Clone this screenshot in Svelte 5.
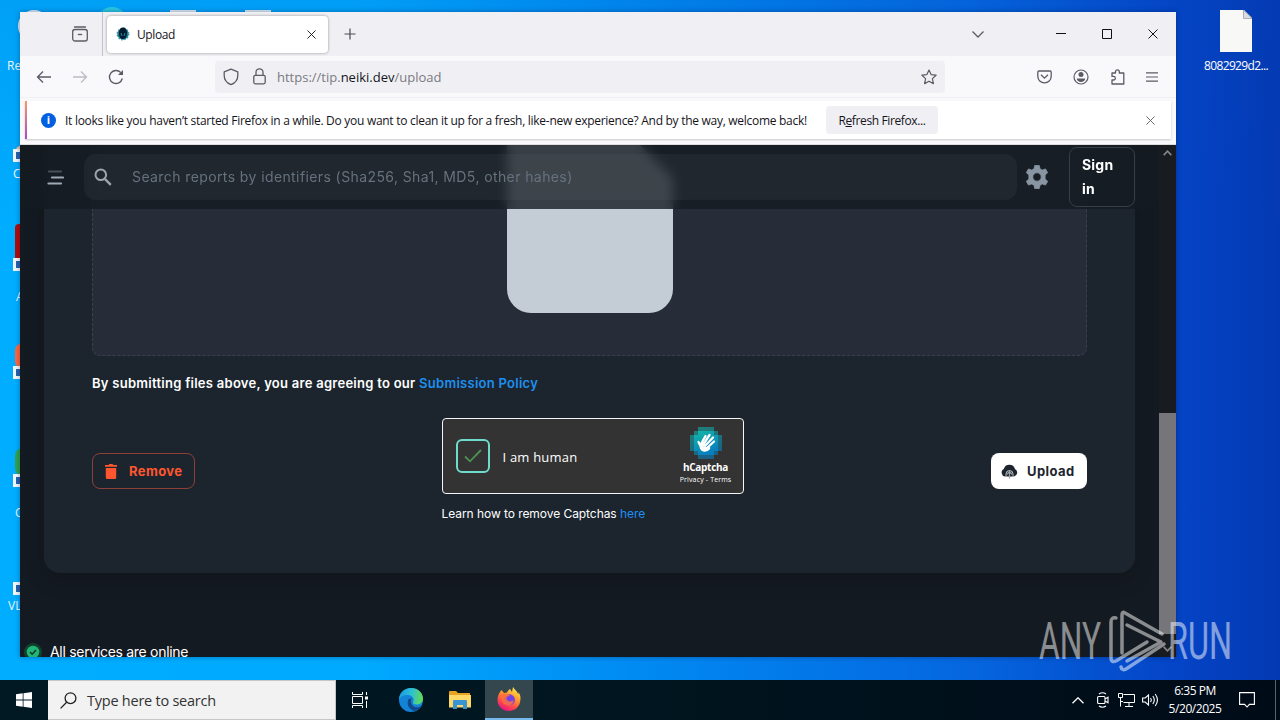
<script lang="ts">
	interface Shortcut {
		top: number;
		color: string;
		shape: string;
		height: number;
	}

	const shortcuts: Shortcut[] = [
		{ top: 145, color: '#f3c49b', shape: '8px 0 0 0', height: 12 },
		{ top: 224, color: '#b30b0b', shape: '4px 0 0 0', height: 36 },
		{ top: 343, color: '#ff653f', shape: '10px 0 0 10px', height: 26 },
		{ top: 448, color: '#31a350', shape: '14px 0 0 14px', height: 28 }
	];

	let query = $state('');
	let verified = $state(true);
</script>

{#snippet cross(size: number)}
	<svg width={size} height={size} viewBox="0 0 10 10" fill="none" stroke="currentColor">
		<path d="M.5.5l9 9M9.5.5l-9 9" />
	</svg>
{/snippet}

<div class="screen">
	<div class="desktop">
		<span class="behind round" style="left: 18px"></span>
		<span class="behind round teal" style="left: 96px"></span>
		<span class="behind" style="left: 170px"></span>
		<span class="behind" style="left: 245px"></span>

		<span class="icon-label" style="left: 7px; top: 58px">Re</span>
		<span class="icon-label" style="left: 13px; top: 166px">C</span>
		<span class="icon-label" style="left: 16px; top: 289px">A</span>
		<span class="icon-label" style="left: 15px; top: 505px">C</span>
		<span class="icon-label" style="left: 8px; top: 598px">VL</span>
		{#each shortcuts as item (item.top)}
			<span
				class="shard"
				style="top: {item.top}px; height: {item.height}px; background: {item.color}; border-radius: {item.shape}"
			></span>
		{/each}
		{#each [149, 258, 366, 474, 582] as top (top)}
			<span class="link-badge" style="top: {top}px"></span>
		{/each}

		<div class="file-icon">
			<svg width="32" height="42" viewBox="0 0 32 42">
				<path d="M0 0h24l8 8v34H0z" fill="#f8f9f6" />
				<path d="M23.500 0v8.500H32z" fill="#d9dde0" stroke="#8f969c" stroke-width=".7" />
			</svg>
			<span>8082929d2...</span>
		</div>

		<main class="window">
			<div class="tabbar">
				<div class="view-button">
					<svg width="16" height="16" viewBox="0 0 16 16" fill="none" stroke="#5b5b66" stroke-width="1.300">
						<path d="M2.500 1h11" stroke-linecap="round" />
						<rect x=".7" y="3.500" width="14.600" height="11.500" rx="2.200" />
						<path d="M5.800 8.500h4.400" />
					</svg>
				</div>
				<div class="tab">
					<svg width="14" height="14" viewBox="0 0 14 14">
						<circle cx="7" cy="7" r="5.700" fill="#177c8c" stroke="#3c9ca8" stroke-width="1.500" stroke-dasharray="1.500 1.500" />
						<path d="M7 .5c3 0 4 2.500 4 5.500S9.500 12 7 12 3 9.500 3 6.500 4 .5 7 .5z" fill="#061a30" />
						<path d="M5 6l1 3M9 6L8 9" stroke="#1f8ba5" />
					</svg>
					<span class="tab-title">Upload</span>
					{@render cross(9)}
				</div>
				<svg class="plus" width="12" height="12" viewBox="0 0 12 12" stroke="#4a4a55" stroke-width="1.200">
					<path d="M6 .5v11M.5 6h11" />
				</svg>
				<div class="caption">
					<svg width="12" height="7" viewBox="0 0 12 7" fill="none" stroke="#5b5b66" stroke-width="1.300"><path d="M.5.5L6 6 11.500.5" /></svg>
					<svg width="10" height="10" viewBox="0 0 10 10" stroke="#111"><path d="M0 4.500h10" /></svg>
					<svg width="10" height="10" viewBox="0 0 10 10" fill="none" stroke="#111"><path d="M.5.5h9v9h-9z" /></svg>
					{@render cross(10)}
				</div>
			</div>

			<div class="navbar">
				<div class="nav-buttons">
					<svg width="16" height="14" viewBox="0 0 16 14" fill="none" stroke="#5b5b66" stroke-width="1.300"><path d="M15 7H1.500M7 1.500L1.500 7 7 12.500" /></svg>
					<svg width="16" height="14" viewBox="0 0 16 14" fill="none" stroke="#bcbcc3" stroke-width="1.300"><path d="M1 7h13.500M9 1.500L14.500 7 9 12.500" /></svg>
					<svg width="16" height="16" viewBox="0 0 16 16" fill="none" stroke="#5b5b66" stroke-width="1.400">
						<path d="M14.300 9.500A6.500 6.500 0 1 1 12.800 3.600" />
						<path d="M15 1v5h-5z" fill="#5b5b66" stroke="none" />
					</svg>
				</div>
				<div class="urlbar">
					<svg width="16" height="18" viewBox="0 0 16 18" fill="none" stroke="#5b5b66" stroke-width="1.300" stroke-linejoin="round">
						<path d="M8 1.200l6.800 2.600v3.700c0 4-2.600 7.500-6.800 9.200C3.800 15 1.200 11.500 1.200 7.500V3.800z" />
					</svg>
					<svg width="13" height="17" viewBox="0 0 13 17" fill="none" stroke="#5b5b66" stroke-width="1.300">
						<rect x=".8" y="7.300" width="11.400" height="8.500" rx="1.500" />
						<path d="M3 7V4.300a3.500 3.500 0 0 1 7 0V7" />
					</svg>
					<span class="url">https://tip.<b>neiki.dev</b>/upload</span>
					<svg width="16" height="16" viewBox="0 0 16 16" fill="none" stroke="#5b5b66" stroke-width="1.200" stroke-linejoin="round">
						<path d="M8 1l2.100 4.600 5 .6-3.700 3.400 1 5L8 12.200l-4.400 2.400 1-5L.9 6.200l5-.6z" />
					</svg>
				</div>
				<div class="tools">
					<svg width="15" height="14" viewBox="0 0 15 14" fill="none" stroke="#5b5b66" stroke-width="1.300">
						<path d="M2 1h11a1.200 1.200 0 0 1 1.200 1.200v4a6.700 6.700 0 0 1-13.400 0v-4A1.200 1.200 0 0 1 2 1z" />
						<path d="M4 4.800l3.500 3.400L11 4.800" />
					</svg>
					<svg width="16" height="16" viewBox="0 0 16 16" fill="none" stroke="#5b5b66" stroke-width="1.200">
						<circle cx="8" cy="8" r="7" />
						<circle cx="8" cy="5.600" r="2.500" fill="#5b5b66" stroke="none" />
						<path d="M3.800 9.500h8.400c0 2-2 3.500-4.200 3.500s-4.200-1.500-4.200-3.500z" fill="#5b5b66" stroke="none" />
					</svg>
					<svg width="15" height="16" viewBox="0 0 15 16" fill="none" stroke="#5b5b66" stroke-width="1.300" stroke-linejoin="round">
						<path d="M5.500 4V2.800a1.900 1.900 0 0 1 3.800 0V4h4.500v11H2v-4h1.500a1.800 1.800 0 0 0 0-3.600H2V4z" />
					</svg>
					<svg width="12" height="10" viewBox="0 0 12 10" stroke="#5b5b66" stroke-width="1.200"><path d="M0 .8h12M0 5h12M0 9.200h12" /></svg>
				</div>
			</div>

			<div class="notice-wrap">
				<div class="notice">
					<span class="info">i</span>
					<span class="notice-text">
						It looks like you haven’t started Firefox in a while. Do you want to clean it up for a fresh, like-new experience? And by the way, welcome back!
					</span>
					<button class="refresh">R<u>e</u>fresh Firefox...</button>
					<span class="dismiss">{@render cross(9)}</span>
				</div>
			</div>

			<div class="viewport">
				<div class="page">
					<header class="topbar">
						<svg class="menu" width="17" height="15" viewBox="0 0 17 15" stroke-width="2.200" stroke-linecap="round">
							<path d="M2 1.500h12" stroke="#48515a" />
							<path d="M5 7.500h11" stroke="#9fa9b4" />
							<path d="M1.500 13.500h12.500" stroke="#9fa9b4" />
						</svg>
						<div class="search">
							<svg width="18" height="18" viewBox="0 0 18 18" fill="none" stroke="#9fa5aa" stroke-width="2">
								<circle cx="6.800" cy="6.800" r="5.300" />
								<path d="M10.800 10.800l6 6" stroke-width="2.400" />
							</svg>
							<input
								bind:value={query}
								aria-label="Search reports"
								placeholder="Search reports by identifiers (Sha256, Sha1, MD5, other hahes)"
							/>
						</div>
						<svg class="gear" width="24" height="24" viewBox="0 0 24 24" fill="#8995a2" stroke="#8995a2" stroke-width=".8" stroke-linejoin="round">
							<path
								fill-rule="evenodd"
								d="M9.700.5h4.600l.7 3.300 2.200 1.300 3.300-1.200 2.200 3.800-2.600 2.300v4l2.600 2.300-2.200 3.800-3.300-1.200-2.200 1.300-.7 3.300H9.700L9 20.200l-2.200-1.300-3.300 1.200-2.200-3.800L3.900 14v-4L1.300 7.700l2.200-3.800 3.300 1.200L9 3.800zM12 7.800a4.200 4.200 0 1 0 0 8.400 4.200 4.200 0 0 0 0-8.400z"
							/>
						</svg>
						<button class="signin">Sign in</button>
					</header>

					<section class="card">
						<div class="dropzone">
							<svg width="166" height="168" viewBox="0 0 166 168" fill="#c4cdd5">
								<path d="M0 0H133L166 33V144a24 24 0 0 1-24 24H24a24 24 0 0 1-24-24z" />
							</svg>
						</div>
						<p class="policy">By submitting files above, you are agreeing to our <a href="#policy">Submission Policy</a></p>
						<div class="actions">
							<button class="remove">
								<svg width="12" height="15" viewBox="0 0 12 15" fill="#ff5630">
									<path d="M0 1h3.500L4.500 0h3l1 1H12v1.800H0zM.8 4h10.400v9.500A1.500 1.500 0 0 1 9.700 15H2.300a1.500 1.500 0 0 1-1.500-1.500z" />
								</svg>
								<span>Remove</span>
							</button>
							<div class="captcha-col">
								<div class="captcha">
									<button class="check" aria-label="I am human" onclick={() => (verified = !verified)}>
										{#if verified}
											<svg width="18" height="14" viewBox="0 0 18 14" fill="none" stroke="#4c9353" stroke-width="1.800"><path d="M1 7.500l5 4.800L17 1" /></svg>
										{/if}
									</button>
									<span class="human">I am human</span>
									<div class="brand">
										<svg width="32" height="32" viewBox="0 0 32 32">
											<defs>
												<linearGradient id="tiles" x1="0" y1="0" x2=".4" y2="1">
													<stop offset="0" stop-color="#13b7a5" />
													<stop offset="1" stop-color="#087fbf" />
												</linearGradient>
											</defs>
											<path d="M8 0h16v4h4v4h4v16h-4v4h-4v4H8v-4H4v-4H0V8h4V4h4z" fill="url(#tiles)" opacity=".6" />
											<path d="M8 4h16v4h4v16h-4v4H8v-4H4V8h4z" fill="url(#tiles)" />
											<g fill="none" stroke="#fff" stroke-width="2.300" stroke-linecap="round">
												<path d="M11 17l4.500-8M13 18l6.500-10M15 19l8-8.500M17 21l7-6.500M11 20l-2.500-5" />
												<path d="M11.500 18.500c-.5 5 4 6 7 2.500" fill="#fff" stroke-width="3.500" />
											</g>
										</svg>
										<strong>hCaptcha</strong>
										<small>Privacy - Terms</small>
									</div>
								</div>
								<p class="learn">Learn how to remove Captchas <a href="#captcha">here</a></p>
							</div>
							<button class="upload">
								<svg width="17" height="15" viewBox="0 0 17 15">
									<path d="M4 12.500A4 4 0 0 1 2.800 5 5.800 5.800 0 0 1 14 5a4 4 0 0 1-1 7.500z" fill="#1c252e" />
									<path d="M5 12.500V10a3.500 3.500 0 0 1 7 0v2.500" fill="none" stroke="#fff" stroke-width=".7" />
									<path d="M8.500 14.500V8M5.900 10.200l2.600-2.500 2.600 2.500" fill="none" stroke="#9ba0a5" stroke-width="1.200" />
								</svg>
								<span>Upload</span>
							</button>
						</div>
					</section>

					<footer>
						<svg width="18" height="18" viewBox="0 0 18 18">
							<circle cx="9" cy="9" r="9" fill="#10412f" />
							<circle cx="9" cy="9" r="6.300" fill="#22b573" />
							<path d="M6 9l2.200 2.200L12 7" fill="none" stroke="#123a2c" stroke-width="1.600" />
						</svg>
						<span>All services are online</span>
					</footer>
				</div>
				<div class="scrollbar">
					<svg width="9" height="6" viewBox="0 0 9 6" fill="none" stroke="#84858a" stroke-width="1.700"><path d="M.7 5.200L4.500 1.200l3.800 4" /></svg>
					<div class="thumb"></div>
					<svg width="9" height="6" viewBox="0 0 9 6" fill="none" stroke="#84858a" stroke-width="1.700"><path d="M.7.8l3.800 4 3.800-4" /></svg>
				</div>
			</div>
		</main>

		<svg class="watermark" width="210" height="66" viewBox="0 0 210 66">
			<g fill="#fff" font-family="Roboto, sans-serif" font-size="51" font-weight="400">
				<text x="3" y="51" textLength="62" lengthAdjust="spacingAndGlyphs">ANY</text>
				<text x="132" y="51" textLength="64" lengthAdjust="spacingAndGlyphs">RUN</text>
			</g>
			<g fill="none" stroke="#fff" stroke-width="3.500" stroke-linejoin="round" stroke-linecap="round">
				<path d="M86 45V7q0-4 3-2l37 21" />
				<path d="M80 10q-5-1-5 4v36q0 5 5 3l31-19" />
				<path d="M91 17l34 17-34 19" />
				<path d="M85 59q1 4 5 2l38-25" />
			</g>
		</svg>
	</div>

	<div class="taskbar">
		<div class="start">
			<svg width="16" height="16" viewBox="0 0 16 16" fill="#fff"><path d="M0 2.300l6.700-1v6.300H0zM7.500 1.200L16 0v7.600H7.500zM0 8.400h6.700v6.300l-6.700-1zM7.500 8.400H16V16l-8.500-1.200z" /></svg>
		</div>
		<div class="task-search">
			<svg width="17" height="17" viewBox="0 0 17 17" fill="none" stroke="#222" stroke-width="1.300"><circle cx="10.500" cy="6.200" r="5.400" /><path d="M6.600 10.200L.6 16.400" /></svg>
			<span>Type here to search</span>
		</div>
		<div class="task">
			<svg width="16" height="16" viewBox="0 0 16 16" fill="none" stroke="#fff">
				<path d="M.5 0v2.500h10V0M.5 16v-2.500h10V16M.5 4.500h10v7H.5zM14.500 0v3M14.500 9v7" />
				<path d="M13 4.500h3v3h-3z" fill="#fff" stroke="none" />
			</svg>
		</div>
		<div class="task edge">
			<svg width="24" height="24" viewBox="0 0 24 24">
				<defs>
					<linearGradient id="edge-top" x1="0" y1=".4" x2="1" y2=".5">
						<stop offset="0" stop-color="#199be2" />
						<stop offset=".5" stop-color="#2cc0d4" />
						<stop offset="1" stop-color="#65db52" />
					</linearGradient>
				</defs>
				<circle cx="12" cy="12" r="12" fill="#1383d8" />
				<path d="M0 12C0 5 5 0 12 0s12 5 12 10.500c0 4-3 6-6.500 6-3 0-4-1.200-3.300-2.500C16 10 12.500 7 9 7 4 7 1 9 0 12z" fill="url(#edge-top)" />
				<path d="M9.500 11c-2.500 5 .5 11 6.500 12 3-1 5.500-3 6.500-5-4 2.500-10 1.500-10.500-4.500 0-1.500.4-2.500 1-3z" fill="#114a8b" />
			</svg>
		</div>
		<div class="task files">
			<svg width="22" height="18" viewBox="0 0 22 18">
				<path d="M0 1q0-1 1-1h6l2 2h12v5H0z" fill="#e8a321" />
				<path d="M0 4h22v12.500H0z" fill="#ffd967" />
				<path d="M4 10q0-1 1-1h12q1 0 1 1v8h-4v-4H8v4H4z" fill="#3a94d4" />
			</svg>
		</div>
		<div class="task active">
			<svg width="24" height="24" viewBox="0 0 24 24">
				<defs>
					<linearGradient id="fox" x1=".8" y1="0" x2=".3" y2="1">
						<stop offset="0" stop-color="#fff04d" />
						<stop offset=".4" stop-color="#ff9a2b" />
						<stop offset=".75" stop-color="#ff4050" />
						<stop offset="1" stop-color="#e31587" />
					</linearGradient>
				</defs>
				<path d="M3 5l1.500-2L7 6l3-.5C11 3 13 2 13 2l2 3 1-5c2 3 4 4 5 7 1-.5.500-2 .5-2C24 9 24 12 22.500 17 20 22 16 24 12 24 5 24 .5 19 .5 13c0-3 1-6 2.500-8z" fill="url(#fox)" />
				<circle cx="12.500" cy="12.800" r="5.500" fill="#7542e5" />
				<path d="M4 8c3-2 7-2 9 1-3 0-4 1.500-3.500 3 1 3 5 3 7 1 0 4-3 6-6 5.500C6 18 4 13 4 8z" fill="#ff7139" opacity=".85" />
			</svg>
		</div>
		<div class="tray">
			<svg width="12" height="7" viewBox="0 0 12 7" fill="none" stroke="#fff" stroke-width="1.300"><path d="M.5 6.300L6 .8l5.500 5.500" /></svg>
			<svg class="meet" width="12" height="16" viewBox="0 0 12 16" fill="none" stroke="#fff" stroke-width="1.100">
				<path d="M2 2q3.500-2.500 7 0M2 14q3.500 2.500 7 0" />
				<rect x=".6" y="4.500" width="7.400" height="7" rx="1" /><path d="M8 7l3-1.800v5.600L8 9" />
			</svg>
			<svg class="net" width="17" height="14" viewBox="0 0 17 14" fill="none" stroke="#fff">
				<path d="M5.500 1.500h11v8h-11M11 9.500v4M7 13.500h8M.5.5h4v4h-4zM2.500 4.500v9M2.500 8.500H5" />
			</svg>
			<svg class="sound" width="17" height="14" viewBox="0 0 17 14" fill="none" stroke="#fff" stroke-width="1.100">
				<path d="M.6 5h2.600L6.500 2v10L3.200 9H.6z" /><path d="M8.500 5q1.500 2 0 4M10.800 3q3 4 0 8M13.200 1q4.500 6 0 12" />
			</svg>
			<div class="clock"><span>6:35 PM</span><span>5/20/2025</span></div>
			<svg class="action" width="16" height="16" viewBox="0 0 16 16" fill="none" stroke="#fff" stroke-width="1.100"><path d="M.6.600h14.800v11.800h-5L8 15l-2.400-2.600h-5z" /></svg>
			<span class="peek"></span>
		</div>
	</div>
</div>

<style>
	:global(body) {
		margin: 0;
		overflow: hidden;
	}

	.screen {
		width: 1280px;
		height: 720px;
		display: flex;
		flex-direction: column;
		font-family: 'Open Sans', 'Noto Sans', sans-serif;
		font-size: 12px;
		color: #15141a;
	}

	.screen * {
		box-sizing: border-box;
	}

	svg {
		display: block;
		flex: none;
	}

	button {
		font: inherit;
		border: 0;
		margin: 0;
	}

	.desktop {
		position: relative;
		height: 680px;
		overflow: hidden;
		background:
			linear-gradient(to bottom, rgb(0 70 180 / 0.12), transparent 35%),
			linear-gradient(90deg, #00adff 0, #00aaff 28%, #008af2 50%, #0566df 76%, #0444c6 92%, #0439b2 100%);
	}

	/* desktop icons that stick out from behind the window */
	.behind {
		position: absolute;
		top: 10px;
		width: 26px;
		height: 14px;
		background: #dceaf5;
	}

	.round {
		width: 32px;
		height: 32px;
		border-radius: 50%;
	}

	.teal {
		top: 7px;
		background: #29c6df;
	}

	.icon-label {
		position: absolute;
		color: #e9f7ff;
		line-height: 16px;
	}

	.shard {
		position: absolute;
		left: 15px;
		width: 8px;
	}

	.link-badge {
		position: absolute;
		left: 13px;
		width: 12px;
		height: 13px;
		border: 3px solid #f4f8fb;
		background: #2862ad;
	}

	.file-icon {
		position: absolute;
		left: 1196px;
		top: 10px;
		width: 80px;
		display: flex;
		flex-direction: column;
		align-items: center;
		gap: 6px;
		color: #fff;
		line-height: 16px;
		letter-spacing: -0.65px;
	}

	.window {
		position: absolute;
		left: 20px;
		top: 12px;
		width: 1156px;
		height: 645px;
		display: flex;
		flex-direction: column;
		background: #f9f9fb;
		box-shadow: 0 0 5px rgb(0 20 60 / 0.4);
	}

	.tabbar {
		height: 44px;
		display: flex;
		align-items: center;
		background: #f0f0f4;
	}

	.view-button {
		width: 83px;
		height: 44px;
		display: flex;
		align-items: center;
		justify-content: flex-end;
		padding-right: 14px;
		border-right: 1px solid #c3c3c9;
	}

	.tab {
		width: 221px;
		height: 37px;
		margin-left: 4px;
		display: flex;
		align-items: center;
		padding: 0 12px 0 9px;
		border-radius: 4px;
		background: #fff;
		box-shadow: 0 0 3px rgb(0 0 0 / 0.4);
	}

	.tab-title {
		flex: 1;
		margin-left: 7px;
		letter-spacing: -0.4px;
	}

	.plus {
		margin-left: 16px;
	}

	.caption {
		margin-left: auto;
		display: flex;
		align-items: center;
		padding-right: 18px;
	}

	.caption svg {
		margin-left: 36px;
	}

	.caption svg:nth-child(2) {
		margin-left: 72px;
	}

	.navbar {
		height: 41px;
		display: flex;
		align-items: center;
	}

	.nav-buttons {
		width: 195px;
		padding-left: 16px;
		display: flex;
		align-items: center;
		gap: 20px;
	}

	.urlbar {
		width: 730px;
		height: 32px;
		display: flex;
		align-items: center;
		padding: 0 8px;
		border-radius: 4px;
		background: #f0f0f4;
	}

	.urlbar svg:nth-child(2) {
		margin-left: 14px;
	}

	.url {
		flex: 1;
		margin-left: 11px;
		font-size: 13px;
		color: #7a7a82;
	}

	.url b {
		font-weight: 400;
		color: #15141a;
	}

	.tools {
		flex: 1;
		display: flex;
		align-items: center;
		justify-content: flex-end;
		gap: 21px;
		padding-right: 18px;
	}

	.notice-wrap {
		height: 48px;
		padding: 3px 5px 4px;
		border-top: 1px solid #f1f1f4;
		border-bottom: 1px solid #ddd;
	}

	.notice {
		height: 38px;
		display: flex;
		align-items: center;
		padding: 0 16px 0 14px;
		border-left: 2px solid;
		border-image: linear-gradient(#ff9a65, #a24cc9) 1;
		background: #fff;
		box-shadow: 0 1px 2px rgb(0 0 0 / 0.2);
	}

	.info {
		width: 15px;
		height: 15px;
		border-radius: 50%;
		background: #0060df;
		color: #fff;
		font-size: 11px;
		font-weight: 700;
		line-height: 14px;
		text-align: center;
	}

	.notice-text {
		width: 742px;
		margin: 0 19px 0 9px;
		letter-spacing: -0.283px;
		white-space: nowrap;
	}

	.refresh {
		width: 112px;
		height: 28px;
		padding: 0;
		border-radius: 4px;
		background: #f0f0f4;
		color: #15141a;
		letter-spacing: -0.38px;
	}

	.dismiss {
		margin-left: auto;
		color: #5b5b66;
	}

	.viewport {
		height: 512px;
		display: flex;
		overflow: hidden;
		background: #141a21;
		font-family: Inter, 'Liberation Sans', sans-serif;
		color: #fff;
	}

	.page {
		position: relative;
		width: 1139px;
		display: flex;
		flex-direction: column;
	}

	/* stays over the scrolled card */
	.topbar {
		position: absolute;
		z-index: 1;
		top: 0;
		left: 0;
		right: 0;
		height: 64px;
		display: flex;
		align-items: center;
		padding: 0 24px 0 27px;
		background: rgb(20 26 33 / 0.8);
		backdrop-filter: blur(6px);
	}

	.search {
		width: 933px;
		height: 46px;
		margin-left: 20px;
		display: flex;
		align-items: center;
		padding: 0 10px;
		border-radius: 12px;
		background: rgb(145 158 171 / 0.08);
	}

	.search input {
		flex: 1;
		margin-left: 20px;
		padding: 0;
		border: 0;
		outline: 0;
		background: none;
		color: #fff;
		font: 14px/20px Inter, sans-serif;
		letter-spacing: 0.4px;
	}

	.search input::placeholder {
		color: #66727e;
	}

	.gear {
		margin-left: 8px;
	}

	.signin {
		width: 66px;
		height: 60px;
		margin-left: auto;
		padding: 0 12px;
		border: 1px solid #363e47;
		border-radius: 8px;
		background: none;
		color: #fff;
		font-size: 14px;
		font-weight: 700;
		line-height: 24px;
		letter-spacing: 0.2px;
		text-align: left;
		white-space: normal;
	}

	.card {
		height: 428px;
		flex: none;
		margin: 0 24px;
		padding: 0 48px;
		border-radius: 0 0 16px 16px;
		background: #1c252e;
		box-shadow: 0 8px 20px rgb(0 0 0 / 0.15);
	}

	.dropzone {
		height: 211px;
		display: flex;
		justify-content: center;
		border: 1px dashed #38424f;
		border-top: 0;
		border-radius: 0 0 8px 8px;
		background: #262d38;
	}

	.policy {
		margin: 16px 0 23px;
		font-size: 13px;
		font-weight: 600;
		line-height: 23px;
		letter-spacing: 0.27px;
	}

	a {
		color: #1c8ff0;
		text-decoration: none;
	}

	.actions {
		display: flex;
		justify-content: space-between;
		align-items: flex-start;
	}

	.remove,
	.upload {
		height: 36px;
		margin-top: 35px;
		display: flex;
		align-items: center;
		padding: 0;
		border-radius: 8px;
		font-size: 13px;
		font-weight: 700;
		letter-spacing: 0.4px;
	}

	.remove {
		width: 103px;
		padding-left: 12px;
		gap: 12px;
		border: 1px solid #8d4038;
		background: none;
		color: #ff5630;
	}

	.upload {
		width: 96px;
		padding-left: 10px;
		gap: 9px;
		background: #fff;
		color: #1c252e;
	}

	.captcha-col {
		width: 302px;
	}

	.captcha {
		height: 76px;
		display: flex;
		align-items: center;
		padding: 0 10px 0 13px;
		border: 1px solid #f5f5f5;
		border-radius: 4px;
		background: #333;
	}

	.actions .captcha-col {
		margin-right: 1px;
	}

	.check {
		width: 34px;
		height: 34px;
		display: flex;
		align-items: center;
		justify-content: center;
		padding: 0;
		border: 2px solid #6fdccb;
		border-radius: 6px;
		background: none;
	}

	.human {
		margin: 1px 0 0 13px;
		font-family: 'Open Sans', sans-serif;
		font-size: 13px;
		letter-spacing: 0.2px;
	}

	.brand {
		width: 54px;
		margin-left: auto;
		display: flex;
		flex-direction: column;
		align-items: center;
		font-family: 'Open Sans', sans-serif;
		white-space: nowrap;
	}

	.brand strong {
		margin-top: 2px;
		font-size: 10px;
		line-height: 13px;
		letter-spacing: -0.3px;
	}

	.brand small {
		font-size: 7px;
		line-height: 11px;
		letter-spacing: 0.15px;
	}

	.learn {
		margin: 12px 0 0;
		font-size: 12px;
		line-height: 16px;
		letter-spacing: -0.06px;
	}

	footer {
		margin-top: 70px;
		display: flex;
		align-items: center;
		gap: 8px;
		padding-left: 4px;
		font-size: 14px;
		line-height: 18px;
		letter-spacing: -0.3px;
	}

	.scrollbar {
		width: 17px;
		display: flex;
		flex-direction: column;
		align-items: center;
		padding: 5px 0;
		background: #181b20;
	}

	.thumb {
		width: 17px;
		height: 221px;
		margin: 257px 0 12px;
		background: #75757a;
	}

	.watermark {
		position: absolute;
		left: 1036px;
		top: 608px;
		opacity: 0.5;
	}

	.taskbar {
		height: 40px;
		display: flex;
		background: linear-gradient(90deg, #001923, #00151f 50%, #000b18);
		color: #fff;
	}

	.start,
	.task {
		width: 48px;
		display: flex;
		align-items: center;
		justify-content: center;
	}

	.task-search {
		width: 288px;
		display: flex;
		align-items: center;
		gap: 10px;
		padding-left: 12px;
		border: 1px solid #c6c6c6;
		border-left: 0;
		background: #f2f2f2;
		color: #333;
		font-size: 14.5px;
		letter-spacing: -0.24px;
	}

	.edge {
		width: 53px;
	}

	.files {
		padding-right: 2px;
	}

	.active {
		background: #34474f;
		border-bottom: 2px solid #76b9ed;
	}

	.tray {
		margin-left: auto;
		display: flex;
		align-items: center;
	}

	.meet {
		margin-left: 13px;
	}

	.net {
		margin-left: 9px;
	}

	.sound {
		margin-left: 7px;
	}

	.clock {
		width: 60px;
		margin-left: 6px;
		display: flex;
		flex-direction: column;
		align-items: center;
		line-height: 18px;
		letter-spacing: -0.45px;
	}

	.action {
		margin: 0 20px 0 14px;
	}

	.peek {
		width: 5px;
		height: 40px;
		border-left: 1px solid #59616a;
	}
</style>
